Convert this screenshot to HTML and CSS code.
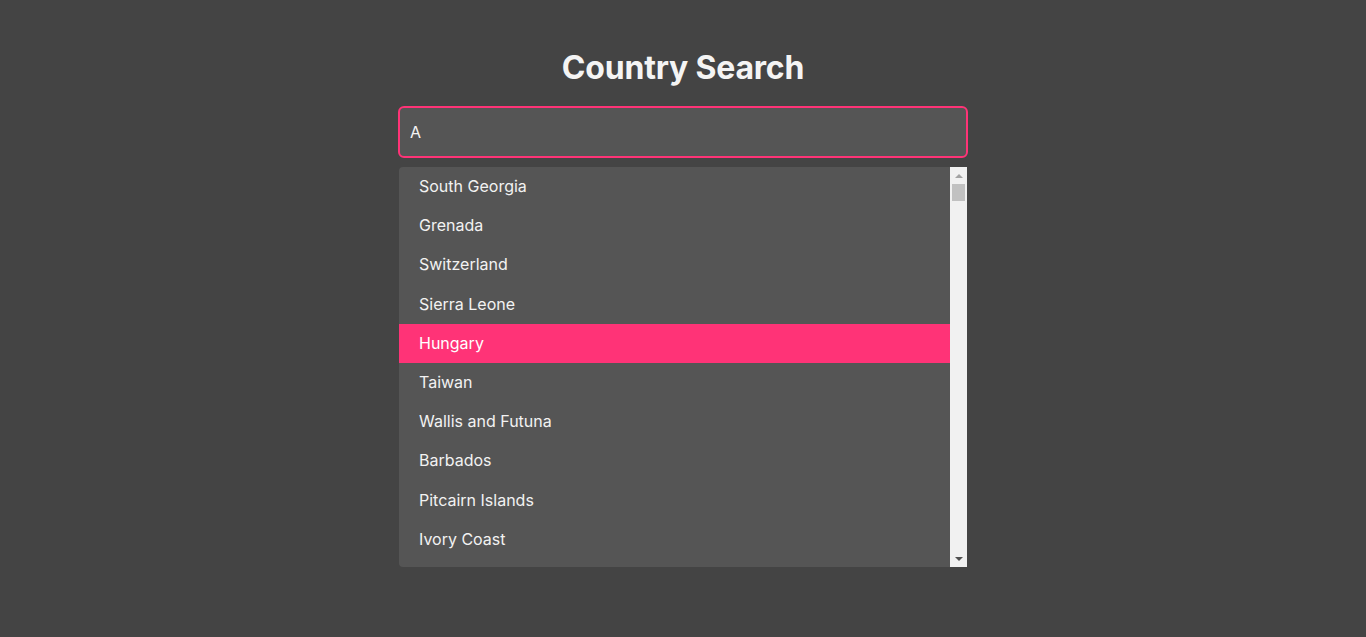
FILE: index.html
```html
<!DOCTYPE html>
<html lang="en">
<head>
<meta charset="utf-8">
<title>Country Search</title>
<link rel="stylesheet" href="styles.css">
</head>
<body>
<main class="app">
  <h1 class="title">Country Search</h1>
  <input class="search" type="text" value="A">
  <div class="dropdown">
    <ul class="results">
      <li class="item">South Georgia</li>
      <li class="item">Grenada</li>
      <li class="item">Switzerland</li>
      <li class="item">Sierra Leone</li>
      <li class="item active">Hungary</li>
      <li class="item">Taiwan</li>
      <li class="item">Wallis and Futuna</li>
      <li class="item">Barbados</li>
      <li class="item">Pitcairn Islands</li>
      <li class="item">Ivory Coast</li>
    </ul>
    <div class="scrollbar" aria-hidden="true">
      <div class="sb-btn"><span class="arrow-up"></span></div>
      <div class="sb-track"><div class="sb-thumb"></div></div>
      <div class="sb-btn"><span class="arrow-down"></span></div>
    </div>
  </div>
</main>
</body>
</html>
```

FILE: styles.css
```css
* {
  box-sizing: border-box;
}

html, body {
  margin: 0;
  padding: 0;
}

body {
  background: #444444;
  font-family: Inter, "Noto Sans", sans-serif;
  color: #f2f2f2;
}

.app {
  width: 570px;
  margin: 0 auto;
  padding-top: 48px;
  display: flex;
  flex-direction: column;
}

.title {
  margin: 0 0 18px;
  font-size: 32px;
  line-height: 40px;
  font-weight: 700;
  letter-spacing: -0.2px;
  text-align: center;
  color: #f4f4f4;
}

.search {
  height: 52px;
  width: 100%;
  border: 2px solid #ff3377;
  border-radius: 6px;
  background: #555555;
  color: #f4f4f4;
  font-family: Inter, "Noto Sans", sans-serif;
  font-size: 16px;
  padding: 0 10px;
  outline: none;
}

.dropdown {
  margin: 9px 1px 0;
  height: 400px;
  display: flex;
  background: #555555;
  border-radius: 4px 0 0 4px;
  overflow: hidden;
}

.results {
  flex: 1;
  list-style: none;
  margin: 0;
  padding: 0;
  overflow: hidden;
}

.item {
  padding: 10px 20px;
  font-size: 16px;
  line-height: 1.2;
  color: #f2f2f2;
  white-space: nowrap;
}

.item.active {
  background: #ff3377;
  color: #fff;
}

.scrollbar {
  width: 17px;
  flex: none;
  display: flex;
  flex-direction: column;
  background: #f1f1f1;
}

.sb-btn {
  height: 17px;
  flex: none;
  display: flex;
  align-items: center;
  justify-content: center;
}

.arrow-up {
  width: 0;
  height: 0;
  border-left: 4px solid transparent;
  border-right: 4px solid transparent;
  border-bottom: 4px solid #a3a3a3;
}

.arrow-down {
  width: 0;
  height: 0;
  border-left: 4px solid transparent;
  border-right: 4px solid transparent;
  border-top: 4px solid #505050;
}

.sb-track {
  flex: 1;
  padding: 0 2px;
}

.sb-thumb {
  height: 17px;
  background: #c1c1c1;
}
```
